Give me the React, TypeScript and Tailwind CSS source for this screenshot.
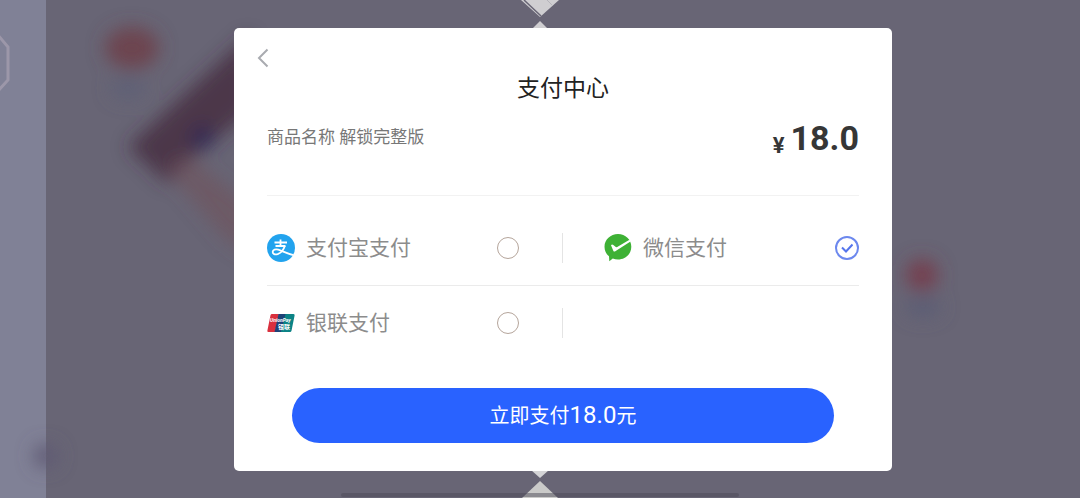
import React, { useState } from 'react';

const AlipayIcon = () => (
  <svg viewBox="0 0 28 28" className="size-7" fill="none" aria-hidden="true">
    <circle cx="14" cy="14" r="14" fill="#22a3ee" />
    <g stroke="#fff" strokeWidth="1.8">
      <path d="M13.500 5.500V12M7.500 8.500H20M8.500 12H18.500" />
      <path d="M17.800 12C16.800 15.200 14.200 18.800 10.700 20.100C8 21 5.600 20 5.700 17.900C5.800 15.700 8.600 15 11.200 15.700C15 16.800 19.500 19.300 26.500 21.200" />
    </g>
  </svg>
);

const WechatPayIcon = () => (
  <svg viewBox="0 0 28 28" className="size-7" aria-hidden="true">
    <path
      d="M14 0C21.500 0 27.300 5.600 27.300 12.700S21.500 25.500 14 25.500c-1.900 0-3.600-.3-5.200-.9L5.300 27.200 5 22.300C2.300 20 .5 16.700.5 12.700.5 5.600 6.500 0 14 0Z"
      fill="#3eb135"
    />
    <path
      d="M7 11.300c.7-1.100 1.500-.9 2.300-.3l2.500 1.900c.5.300.9.300 1.400.1L25.500 5.700l1 1.800L11.300 17.300c-.9.500-1.600.3-2-.6Z"
      fill="#fff"
    />
  </svg>
);

const UnionPayIcon = () => (
  <svg viewBox="0 0 28 20" className="h-5 w-7" aria-hidden="true">
    <path d="M5 1h7L8 19H1.500Q0 19 .4 17.500L3.500 2.200Q3.800 1 5 1Z" fill="#d9303e" />
    <path d="M11.500 1h8l-4 18h-8Z" fill="#1d4377" />
    <path d="M18.500 1h8Q28 1 27.600 2.500L24.500 17.700Q24.200 19 23 19h-9Z" fill="#0c8385" />
    <text x="3" y="9" fontSize="5" fontWeight="700" fontStyle="italic" fontFamily="Roboto, sans-serif" fill="#fff">
      UnionPay
    </text>
    <text x="11" y="16" fontSize="6" fontWeight="700" fontFamily="'Noto Sans CJK SC', sans-serif" fill="#fff">
      银联
    </text>
  </svg>
);

const Backdrop = () => (
  <div className="pointer-events-none absolute inset-0 overflow-hidden" aria-hidden="true">
    <svg width="1080" height="498" className="absolute top-0 left-0">
      <defs>
        <filter id="soft" x="-50%" y="-50%" width="200%" height="200%">
          <feGaussianBlur stdDeviation="9" />
        </filter>
      </defs>
      <g filter="url(#soft)">
        <ellipse cx="132" cy="48" rx="27" ry="21" fill="#6d4450" />
        <ellipse cx="128" cy="88" rx="17" ry="11" fill="#5e6076" />
        <path d="M128 147L250 34V112L190 160L168 184Z" fill="#452a3e" opacity=".8" />
        <circle cx="203" cy="138" r="11" fill="#332c54" />
        <path d="M165 168L188 156L250 205V256L225 238Z" fill="#70515c" opacity=".6" />
        <circle cx="922" cy="275" r="16" fill="#743f50" />
        <ellipse cx="923" cy="307" rx="18" ry="10" fill="#5b5d75" />
        <circle cx="46" cy="456" r="12" fill="#5f5a73" />
      </g>
      <path d="M-3 34L8 47V80L-3 92" fill="none" stroke="#9c97a9" strokeWidth="3" />
    </svg>
    <svg width="40" height="28" className="absolute top-0 left-1/2 -translate-x-1/2">
      <path d="M1 0H39L20 17Z" fill="#cfced1" />
      <path d="M4 0L21 16" stroke="#686575" strokeWidth="1.5" />
      <path d="M27 0L32 5" stroke="#b5b4ba" strokeWidth="1" />
      <path d="M20 21L27 28H13Z" fill="#cfced1" />
    </svg>
    <svg width="40" height="28" className="absolute bottom-0 left-1/2 -translate-x-1/2">
      <path d="M11 0H29L20 8Z" fill="#d4d4d6" />
      <path d="M20 11L38 28H2Z" fill="#cacac9" />
    </svg>
    <div className="absolute bottom-px left-1/2 h-1 w-[398px] -translate-x-1/2 rounded-full bg-[#4c4a57]/50" />
  </div>
);

const methods = [
  { id: 'alipay', label: '支付宝支付', icon: <AlipayIcon /> },
  { id: 'wechat', label: '微信支付', icon: <WechatPayIcon /> },
  { id: 'unionpay', label: '银联支付', icon: <UnionPayIcon /> },
];

const App = () => {
  const [method, setMethod] = useState('wechat');

  return (
    <div className="relative flex min-h-screen bg-[#686575] font-['Roboto','Noto_Sans_CJK_SC',sans-serif]">
      <div className="w-[46px] shrink-0 bg-[#808196]" />
      <Backdrop />

      <main className="relative flex flex-1 items-center justify-center">
        <form
          className="w-full max-w-[658px] rounded-[5px] bg-white px-[33px] pt-5 pb-7"
          onSubmit={(e) => e.preventDefault()}
        >
          <button type="button" aria-label="返回" className="-ml-[10px] block">
            <svg viewBox="0 0 12 20" className="h-5 w-3" fill="none" stroke="#a9abb0" strokeWidth="2">
              <path d="M10.500 1.500L2 10L10.500 18.500" />
            </svg>
          </button>

          <h1 className="mt-[5px] text-center text-[23px] leading-8 text-[#222]">支付中心</h1>

          <div className="mt-3 flex h-[42px] items-center justify-between">
            <p className="text-[17px] text-[#777]">商品名称 解锁完整版</p>
            <p className="flex items-end gap-1.5 font-bold text-[#363636]">
              <span className="text-[22px] leading-6">¥</span>
              <span className="text-[34px] leading-10">18.0</span>
            </p>
          </div>

          <div
            role="radiogroup"
            aria-label="支付方式"
            className="mt-9 grid grid-cols-2 border-t border-[#f2f2f2] pt-[15px]"
          >
            {methods.map((m, i) => (
              <div
                key={m.id}
                className={`flex h-[75px] items-center border-[#ebebeb] ${i < 2 ? 'border-b' : ''}`}
              >
                <label
                  className={`flex flex-1 cursor-pointer items-center ${i % 2 === 0 ? 'pr-[43px]' : 'pl-[41px]'}`}
                >
                  <span className="flex size-7 shrink-0 items-center justify-center">{m.icon}</span>
                  <span className="ml-[11px] flex-1 text-[21px] leading-7 text-[#8c8c8c]">{m.label}</span>
                  <span className="grid place-items-center">
                    <input
                      type="radio"
                      name="method"
                      value={m.id}
                      checked={method === m.id}
                      onChange={() => setMethod(m.id)}
                      className="peer col-start-1 row-start-1 size-[22px] appearance-none rounded-full border border-[#b5a59b] checked:size-6 checked:border-2 checked:border-[#6c88ee]"
                    />
                    <svg
                      viewBox="0 0 12 10"
                      className="pointer-events-none col-start-1 row-start-1 hidden h-[10px] w-3 peer-checked:block"
                      fill="none"
                      stroke="#5575ec"
                      strokeWidth="2"
                    >
                      <path d="M1 4.500L5 8.500L11.500 1.500" />
                    </svg>
                  </span>
                </label>
                {i % 2 === 0 && <span className="h-[30px] w-px bg-[#e4e4e4]" />}
              </div>
            ))}
          </div>

          <div className="px-[25px] pt-[27px]">
            <button
              type="submit"
              className="flex h-[55px] w-full items-center justify-center rounded-full bg-[#2962ff] text-xl text-white"
            >
              <span>
                立即支付<span className="text-2xl">18.0</span>元
              </span>
            </button>
          </div>
        </form>
      </main>
    </div>
  );
};

export default App;
